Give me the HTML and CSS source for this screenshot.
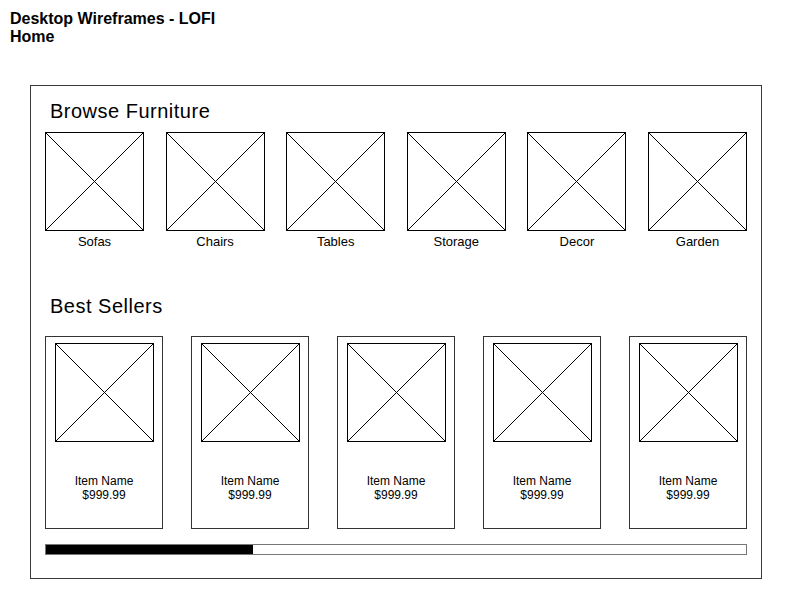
FILE: index.html
```html
<!DOCTYPE html>
<html lang="en">

<head>
    <meta charset="UTF-8">
    <meta name="viewport" content="width=device-width, initial-scale=1.0">
    <title>Desktop Wireframes - LOFI</title>
    <link rel="stylesheet" href="styles.css">
</head>

<body>
    <header class="doc-title">
        <div>Desktop Wireframes - LOFI</div>
        <div>Home</div>
    </header>

    <main class="frame">
        <h2 class="section-title">Browse Furniture</h2>
        <div class="categories">
            <div class="category">
                <svg class="ph" viewBox="0 0 100 100" preserveAspectRatio="none"><line x1="0" y1="0" x2="100" y2="100" vector-effect="non-scaling-stroke"/><line x1="100" y1="0" x2="0" y2="100" vector-effect="non-scaling-stroke"/></svg>
                <span class="category-name">Sofas</span>
            </div>
            <div class="category">
                <svg class="ph" viewBox="0 0 100 100" preserveAspectRatio="none"><line x1="0" y1="0" x2="100" y2="100" vector-effect="non-scaling-stroke"/><line x1="100" y1="0" x2="0" y2="100" vector-effect="non-scaling-stroke"/></svg>
                <span class="category-name">Chairs</span>
            </div>
            <div class="category">
                <svg class="ph" viewBox="0 0 100 100" preserveAspectRatio="none"><line x1="0" y1="0" x2="100" y2="100" vector-effect="non-scaling-stroke"/><line x1="100" y1="0" x2="0" y2="100" vector-effect="non-scaling-stroke"/></svg>
                <span class="category-name">Tables</span>
            </div>
            <div class="category">
                <svg class="ph" viewBox="0 0 100 100" preserveAspectRatio="none"><line x1="0" y1="0" x2="100" y2="100" vector-effect="non-scaling-stroke"/><line x1="100" y1="0" x2="0" y2="100" vector-effect="non-scaling-stroke"/></svg>
                <span class="category-name">Storage</span>
            </div>
            <div class="category">
                <svg class="ph" viewBox="0 0 100 100" preserveAspectRatio="none"><line x1="0" y1="0" x2="100" y2="100" vector-effect="non-scaling-stroke"/><line x1="100" y1="0" x2="0" y2="100" vector-effect="non-scaling-stroke"/></svg>
                <span class="category-name">Decor</span>
            </div>
            <div class="category">
                <svg class="ph" viewBox="0 0 100 100" preserveAspectRatio="none"><line x1="0" y1="0" x2="100" y2="100" vector-effect="non-scaling-stroke"/><line x1="100" y1="0" x2="0" y2="100" vector-effect="non-scaling-stroke"/></svg>
                <span class="category-name">Garden</span>
            </div>
        </div>

        <h2 class="section-title best">Best Sellers</h2>
        <div class="products">
            <div class="card">
                <svg class="ph" viewBox="0 0 100 100" preserveAspectRatio="none"><line x1="0" y1="0" x2="100" y2="100" vector-effect="non-scaling-stroke"/><line x1="100" y1="0" x2="0" y2="100" vector-effect="non-scaling-stroke"/></svg>
                <div class="card-info">Item Name<br>$999.99</div>
            </div>
            <div class="card">
                <svg class="ph" viewBox="0 0 100 100" preserveAspectRatio="none"><line x1="0" y1="0" x2="100" y2="100" vector-effect="non-scaling-stroke"/><line x1="100" y1="0" x2="0" y2="100" vector-effect="non-scaling-stroke"/></svg>
                <div class="card-info">Item Name<br>$999.99</div>
            </div>
            <div class="card">
                <svg class="ph" viewBox="0 0 100 100" preserveAspectRatio="none"><line x1="0" y1="0" x2="100" y2="100" vector-effect="non-scaling-stroke"/><line x1="100" y1="0" x2="0" y2="100" vector-effect="non-scaling-stroke"/></svg>
                <div class="card-info">Item Name<br>$999.99</div>
            </div>
            <div class="card">
                <svg class="ph" viewBox="0 0 100 100" preserveAspectRatio="none"><line x1="0" y1="0" x2="100" y2="100" vector-effect="non-scaling-stroke"/><line x1="100" y1="0" x2="0" y2="100" vector-effect="non-scaling-stroke"/></svg>
                <div class="card-info">Item Name<br>$999.99</div>
            </div>
            <div class="card">
                <svg class="ph" viewBox="0 0 100 100" preserveAspectRatio="none"><line x1="0" y1="0" x2="100" y2="100" vector-effect="non-scaling-stroke"/><line x1="100" y1="0" x2="0" y2="100" vector-effect="non-scaling-stroke"/></svg>
                <div class="card-info">Item Name<br>$999.99</div>
            </div>
        </div>

        <div class="scroll-track">
            <div class="scroll-thumb" style="width: 29.5%"></div>
        </div>
    </main>
</body>

</html>
```

FILE: styles.css
```css
body {
    margin: 0;
    padding: 10px;
    font-family: 'Liberation Sans', Arial, sans-serif;
    color: #000;
    background: #fff;
}

.doc-title {
    font-size: 16px;
    font-weight: bold;
    line-height: 18px;
}

.frame {
    width: 732px;
    height: 494px;
    box-sizing: border-box;
    margin: 39px 0 0 20px;
    padding: 13px 14px 0 14px;
    border: 1px solid #3a3a3a;
    display: flex;
    flex-direction: column;
}

.section-title {
    margin: 0 0 9px 0;
    padding-left: 5px;
    font-size: 20px;
    font-weight: normal;
    line-height: 24px;
    letter-spacing: 0.5px;
}

.section-title.best {
    margin-top: 44px;
    margin-bottom: 18px;
}

.categories {
    display: flex;
    justify-content: space-between;
}

.category {
    width: 99px;
    display: flex;
    flex-direction: column;
    align-items: center;
}

.ph {
    display: block;
    width: 99px;
    height: 99px;
    box-sizing: border-box;
    border: 1px solid #000;
    stroke: #000;
    stroke-width: 1;
}

.category-name {
    margin-top: 3px;
    font-size: 13px;
    line-height: 16px;
}

.products {
    display: flex;
    gap: 28px;
}

.card {
    width: 118px;
    height: 193px;
    box-sizing: border-box;
    border: 1px solid #333;
    padding-top: 6px;
    display: flex;
    flex-direction: column;
    align-items: center;
}

.card-info {
    margin-top: 33px;
    font-size: 12px;
    line-height: 13.5px;
    text-align: center;
}

.scroll-track {
    margin-top: 15px;
    height: 11px;
    box-sizing: border-box;
    border: 1px solid #777;
}

.scroll-thumb {
    height: 100%;
    background: #000;
}
```
